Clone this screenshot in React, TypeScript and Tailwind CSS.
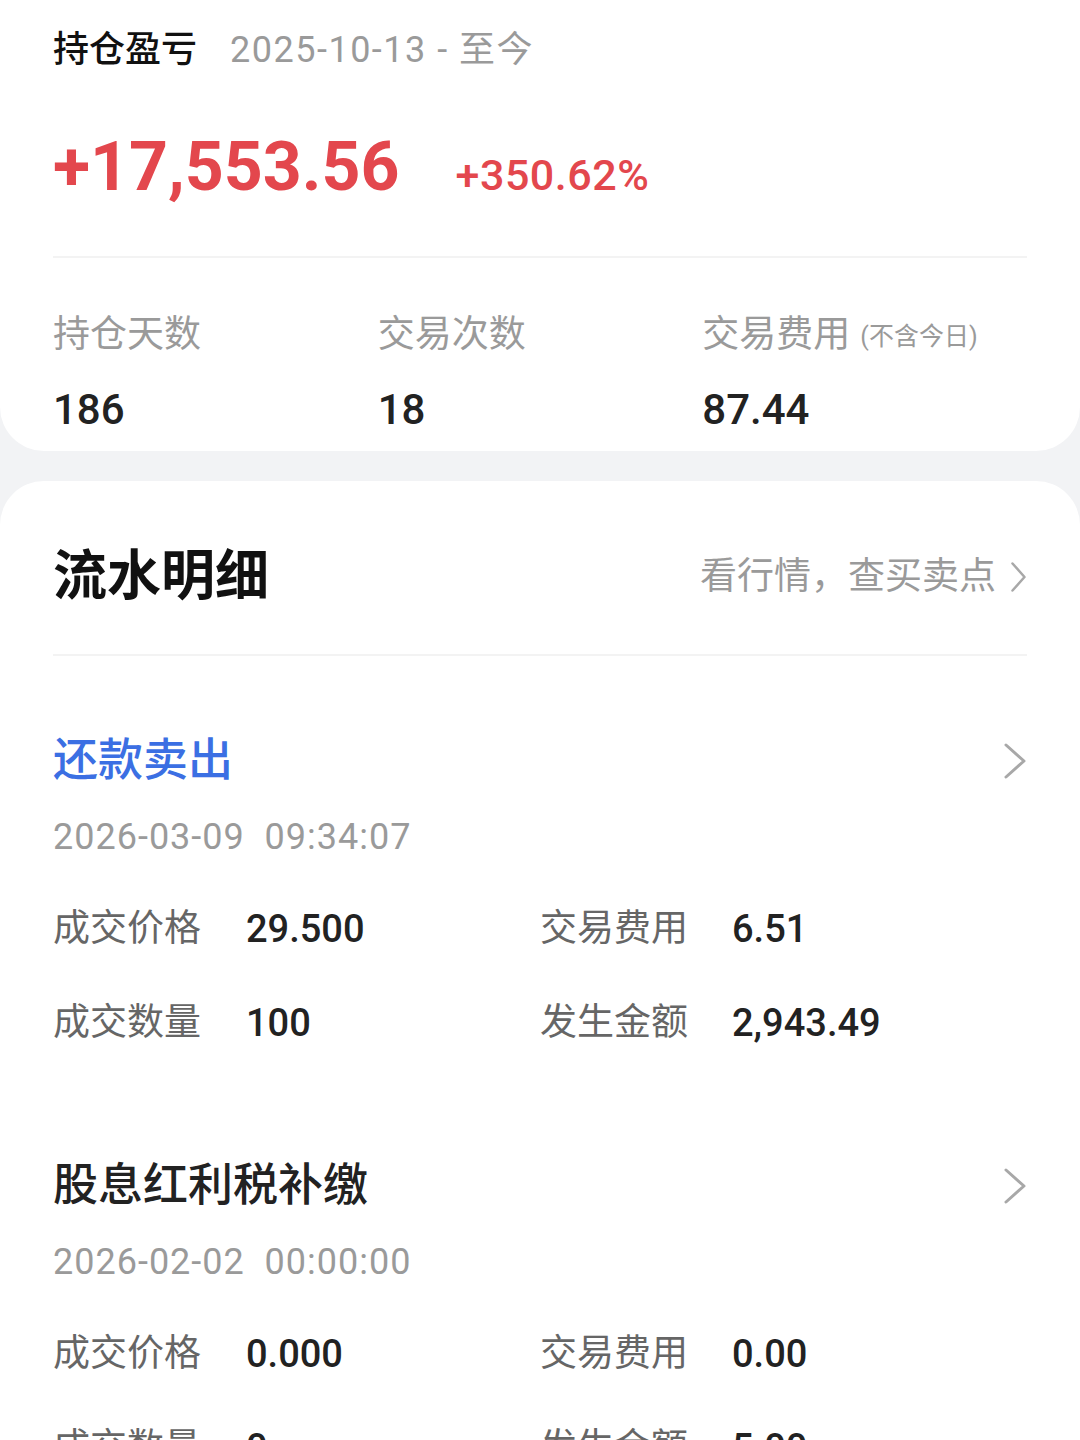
import React from "react";

const FONT = { fontFamily: "Roboto, 'Noto Sans CJK SC', sans-serif" };

const Chevron = ({ w, h, stroke = 3 }: { w: number; h: number; stroke?: number }) => (
  <svg width={w} height={h} viewBox={`0 0 ${w} ${h}`} fill="none">
    <polyline
      points={`${stroke},${stroke} ${w - stroke},${h / 2} ${stroke},${h - stroke}`}
      stroke="#a8a8a8"
      strokeWidth={stroke}
      strokeLinecap="round"
      strokeLinejoin="round"
    />
  </svg>
);

const STATS = [
  { label: "持仓天数", value: "186" },
  { label: "交易次数", value: "18" },
  { label: "交易费用", value: "87.44", note: "(不含今日)" },
];

const RECORDS = [
  {
    title: "还款卖出",
    blue: true,
    time: "2026-03-09\u00a0\u00a009:34:07",
    rows: [
      ["成交价格", "29.500", "交易费用", "6.51"],
      ["成交数量", "100", "发生金额", "2,943.49"],
    ],
  },
  {
    title: "股息红利税补缴",
    blue: false,
    time: "2026-02-02\u00a0\u00a000:00:00",
    rows: [
      ["成交价格", "0.000", "交易费用", "0.00"],
      ["成交数量", "0", "发生金额", "5.00"],
    ],
  },
];

export default function App() {
  return (
    <div className="w-[1080px] h-[1440px] overflow-hidden bg-[#f2f3f5]" style={FONT}>
      {/* 持仓盈亏 */}
      <section className="bg-white rounded-b-[44px] px-[53px] pb-[18px]">
        <div className="h-[100px] flex items-center gap-[33px]">
          <span className="text-[36px] text-[#111] font-medium">持仓盈亏</span>
          <span className="text-[36px] text-[#9a9a9a] tracking-[1.5px]">2025-10-13 - 至今</span>
        </div>
        <div className="mt-[34px] flex items-baseline gap-[56px] text-[#e3474d]">
          <span className="text-[68px] leading-[66px] font-bold">+17,553.56</span>
          <span className="text-[43px] leading-[66px] font-medium tracking-[0.5px]">+350.62%</span>
        </div>
        <div className="mt-[48px] border-t-2 border-[#f3f3f3]" />
        <div className="mt-[55px] grid grid-cols-3">
          {STATS.map((s) => (
            <div key={s.label} className="flex flex-col">
              <div className="h-[44px] flex items-center text-[37px] text-[#9a9a9a]">
                {s.label}
                {s.note && <span className="ml-[10px] text-[25px] mt-[4px]">{s.note}</span>}
              </div>
              <div className="mt-[28px] h-[48px] flex items-center text-[42px] text-[#222] font-medium">
                {s.value}
              </div>
            </div>
          ))}
        </div>
      </section>

      {/* 流水明细 */}
      <section className="mt-[30px] bg-white rounded-t-[44px] px-[53px]">
        <div className="h-[175px] pt-[18px] flex items-center justify-between border-b-2 border-[#f3f3f3]">
          <span className="text-[54px] font-bold text-[#111]">流水明细</span>
          <span className="flex items-center gap-[14px] text-[37px] text-[#9a9a9a]">
            看行情，查买卖点
            <Chevron w={17} h={32} stroke={2.5} />
          </span>
        </div>

        <div className="pt-[75px] flex flex-col gap-[86px]">
          {RECORDS.map((r) => (
            <div key={r.title}>
              <div className="h-[60px] flex items-center justify-between">
                <span
                  className={
                    r.blue
                      ? "text-[45px] font-medium text-[#3b6fe3]"
                      : "text-[45px] font-medium text-[#222]"
                  }
                >
                  {r.title}
                </span>
                <Chevron w={24} h={38} stroke={3} />
              </div>
              <div className="mt-[24px] h-[44px] flex items-center text-[36px] text-[#9a9a9a] tracking-[1px]">
                {r.time}
              </div>
              <div className="mt-[23px]">
                {r.rows.map((row) => (
                  <div key={row[0]} className="h-[94px] grid grid-cols-2">
                    <div className="flex items-center">
                      <span className="w-[193px] text-[37px] text-[#666]">{row[0]}</span>
                      <span className="text-[38px] text-[#222] font-medium">{row[1]}</span>
                    </div>
                    <div className="flex items-center">
                      <span className="w-[192px] text-[37px] text-[#666]">{row[2]}</span>
                      <span className="text-[38px] text-[#222] font-medium">{row[3]}</span>
                    </div>
                  </div>
                ))}
              </div>
            </div>
          ))}
        </div>
      </section>
    </div>
  );
}
